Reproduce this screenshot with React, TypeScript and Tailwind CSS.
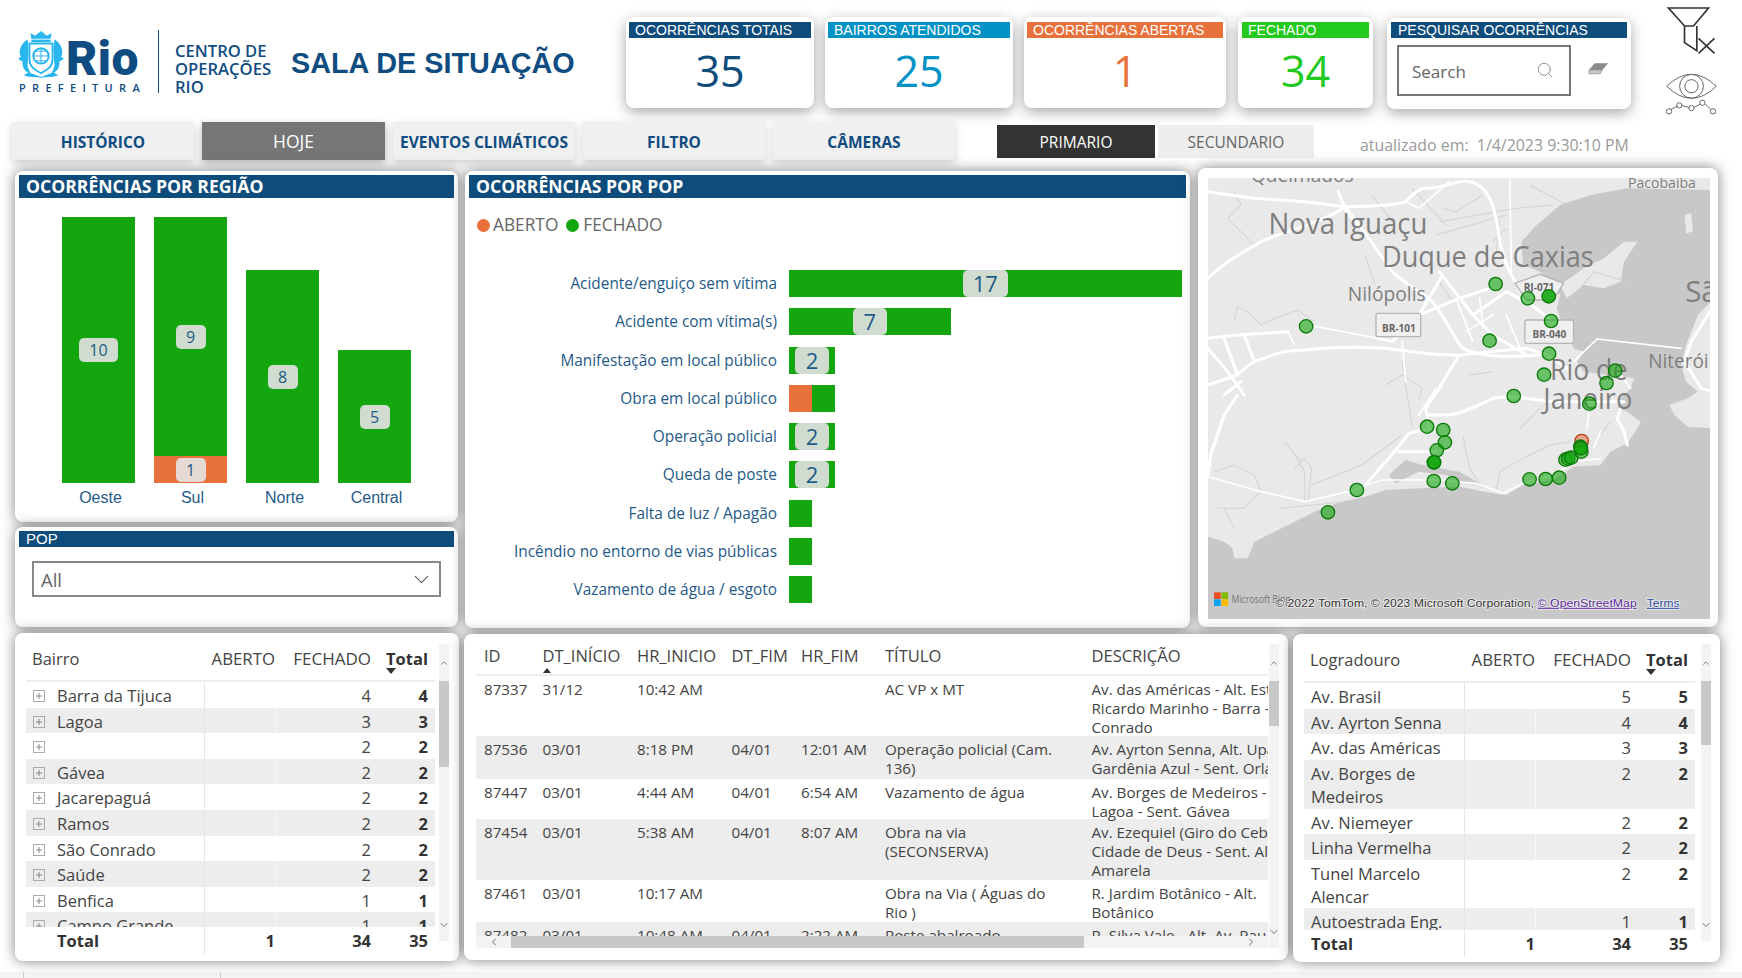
import React from 'react';
import { ChevronDown, ChevronLeft, ChevronRight, ChevronUp, Search } from 'lucide-react';

const Panel: React.FC<{ children: React.ReactNode; className?: string }> = ({ children, className }) => (
  <div className={`relative bg-white rounded-[8px] shadow-[0_0_14px_rgba(0,0,0,0.5)] ${className}`}>{children}</div>
);

const kpis = [
  { title: 'OCORRÊNCIAS TOTAIS', value: '35', bar: 'bg-[#0e4c7c]', text: 'text-[#0e4c7c]', card: 'w-[188px] ml-0', inner: 'mx-[3px]' },
  { title: 'BAIRROS ATENDIDOS', value: '25', bar: 'bg-[#0092c4]', text: 'text-[#0092c4]', card: 'w-[188px] ml-[11px]', inner: 'mx-[3px]' },
  { title: 'OCORRÊNCIAS ABERTAS', value: '1', bar: 'bg-[#e8703a]', text: 'text-[#e8703a]', card: 'w-[202px] ml-[11px]', inner: 'mx-[3px]' },
  { title: 'FECHADO', value: '34', bar: 'bg-[#22c91e]', text: 'text-[#22c91e]', card: 'w-[135px] ml-[12px]', inner: 'mx-[4px]' },
];

const regions = [
  { name: 'Oeste', closed: 10, open: 0, badge: 'w-[39px]' },
  { name: 'Sul', closed: 9, open: 1, badge: 'w-[30px]' },
  { name: 'Norte', closed: 8, open: 0, badge: 'w-[30px]' },
  { name: 'Central', closed: 5, open: 0, badge: 'w-[30px]' },
];

const pops = [
  { name: 'Acidente/enguiço sem vítima', closed: 17, open: 0, label: '17', badge: 'w-[45px]' },
  { name: 'Acidente com vítima(s)', closed: 7, open: 0, label: '7', badge: 'w-[34px]' },
  { name: 'Manifestação em local público', closed: 2, open: 0, label: '2', badge: 'w-[34px]' },
  { name: 'Obra em local público', closed: 1, open: 1, label: '', badge: '' },
  { name: 'Operação policial', closed: 2, open: 0, label: '2', badge: 'w-[34px]' },
  { name: 'Queda de poste', closed: 2, open: 0, label: '2', badge: 'w-[34px]' },
  { name: 'Falta de luz / Apagão', closed: 1, open: 0, label: '', badge: '' },
  { name: 'Incêndio no entorno de vias públicas', closed: 1, open: 0, label: '', badge: '' },
  { name: 'Vazamento de água / esgoto', closed: 1, open: 0, label: '', badge: '' },
];

const bairros = [
  ['Barra da Tijuca', '4'],
  ['Lagoa', '3'],
  ['', '2'],
  ['Gávea', '2'],
  ['Jacarepaguá', '2'],
  ['Ramos', '2'],
  ['São Conrado', '2'],
  ['Saúde', '2'],
  ['Benfica', '1'],
  ['Campo Grande', '1'],
];

const logradouros = [
  ['Av. Brasil', '5'],
  ['Av. Ayrton Senna', '4'],
  ['Av. das Américas', '3'],
  ['Av. Borges de Medeiros', '2'],
  ['Av. Niemeyer', '2'],
  ['Linha Vermelha', '2'],
  ['Tunel Marcelo Alencar', '2'],
  ['Autoestrada Eng. Fernando', '1'],
];

const events = [
  { h: 'h-[60px]', id: '87337', start: '31/12', hr: '10:42 AM', end: '', hrEnd: '', title: ['AC VP x MT'], desc: ['Av. das Américas - Alt. Estr', 'Ricardo Marinho - Barra - São', 'Conrado'] },
  { h: 'h-[43px]', id: '87536', start: '03/01', hr: '8:18 PM', end: '04/01', hrEnd: '12:01 AM', title: ['Operação policial (Cam.', '136)'], desc: ['Av. Ayrton Senna, Alt. Upa', 'Gardênia Azul - Sent. Orla'] },
  { h: 'h-[40px]', id: '87447', start: '03/01', hr: '4:44 AM', end: '04/01', hrEnd: '6:54 AM', title: ['Vazamento de água'], desc: ['Av. Borges de Medeiros -', 'Lagoa - Sent. Gávea'] },
  { h: 'h-[61px]', id: '87454', start: '03/01', hr: '5:38 AM', end: '04/01', hrEnd: '8:07 AM', title: ['Obra na via', '(SECONSERVA)'], desc: ['Av. Ezequiel (Giro do Cebola)', 'Cidade de Deus - Sent. Alta', 'Amarela'] },
  { h: 'h-[42px]', id: '87461', start: '03/01', hr: '10:17 AM', end: '', hrEnd: '', title: ['Obra na Via ( Águas do', 'Rio )'], desc: ['R. Jardim Botânico - Alt.', 'Botânico'] },
  { h: 'h-[40px]', id: '87482', start: '03/01', hr: '10:48 AM', end: '04/01', hrEnd: '2:22 AM', title: ['Poste abalroado'], desc: ['R. Silva Vale - Alt. Av. Pau'] },
];

const markers: [number, number][] = [
  [868, 327], [964, 370], [1033, 438], [850, 497], [1027, 536], [1012, 599], [1224, 587], [1198, 624], [922, 663], [1147, 686],
  [304, 454], [664, 755], [712, 765], [717, 802], [693, 826], [684, 862], [684, 918], [739, 925], [455, 945], [369, 1012],
  [969, 913], [1017, 912], [1057, 908], [1076, 854], [1084, 851], [1093, 848], [1120, 815], [1123, 830],
];

const roads = [
  'M12 310 C60 260 120 230 170 200 C230 170 340 150 420 95 C460 150 500 200 560 290 C600 330 650 350 680 380 C720 430 750 500 770 520 C830 550 920 545 1000 540',
  'M400 50 L420 100 L440 130',
  'M12 50 L150 70 L300 80 L420 95 C500 95 570 90 600 80 C620 60 640 40 660 40 C700 40 740 25 760 20 C800 15 830 30 850 70 C870 110 875 160 880 200 C890 240 900 270 910 290 C930 330 950 370 960 380 L1040 440',
  'M12 490 L100 480 L250 470 M520 490 L560 500 L640 420 L760 370 L850 340',
  'M12 630 L100 600 C130 570 150 555 180 550 C220 530 260 525 300 525 C380 515 460 515 540 520 C620 530 700 545 770 540 C840 530 900 525 960 520 L1020 540 L1080 580',
  'M760 540 C730 590 710 620 700 640 C680 670 665 690 660 700 L670 760 L610 775 L550 850 L480 930',
  'M670 720 L730 720 C770 715 820 690 860 670 C880 665 900 665 920 665 L1040 680 L1150 680 L1250 680',
  'M1240 700 L1230 730 L1250 770 L1260 810',
  'M100 660 L60 720 L20 840 L12 900',
  'M1518 390 L1450 500 L1430 560 L1480 640 L1518 650',
  'M580 830 L690 830',
  'M700 290 L800 420 L860 480 L960 540',
  'M640 420 L710 300 M800 420 L900 350 L990 400',
  'M12 520 L70 590 L120 660',
  'M60 490 L100 600 M120 480 L150 560',
  'M60 660 L110 620',
];

const thinRoads = [
  'M12 905 L170 950 L300 980 L430 950 L530 915 L700 915 L810 925 L890 955 L960 920 L1040 900 L1100 860 L1180 850',
  'M1100 560 L1170 492 L1420 520',
  'M330 454 L520 490',
  'M910 10 L915 290',
  'M750 370 L800 500 M820 370 L830 450 M860 420 L780 470 M900 420 L940 520',
  'M590 500 L600 620 M690 640 L640 720 M730 20 L640 100 L600 80',
  'M1240 600 L1270 640 M1180 770 L1160 820 M1150 680 L1140 760',
  'M250 470 L270 510',
];

const contours = [
  'M70 130 L110 90 L90 50 M70 130 L150 210',
  'M90 440 L100 395 L130 410 L170 450 L200 435 L280 405 L330 440',
  'M540 630 L590 600 L650 640 L640 670',
  'M700 140 L930 100 L1040 90',
  'M690 180 L900 120',
  'M270 840 L300 890 L300 980',
  'M590 560 L600 630 L620 760',
  'M770 780 L790 880 L830 940',
  'M870 950 L880 890 L950 850 L1030 810 L1090 800',
  'M940 760 L1010 690',
  'M30 890 L90 870 L150 900 L170 950 L120 1000 L40 1000',
  'M270 880 L300 850 L320 880 L310 980',
  'M320 930 L470 870 L550 810 L590 780',
  'M230 1000 L420 980',
  'M90 1060 L60 1000',
  'M240 800 L290 860',
  'M500 60 L560 140 M620 40 L720 150 M970 30 L1080 90',
  'M1180 780 L1210 740',
  'M1260 320 L1160 290 L1120 340',
  'M880 130 L870 230 M900 160 L860 200 M830 60 L750 110 L710 100',
  'M480 240 L510 330 M790 600 L860 590 M700 320 L740 380',
];

const Header = () => (
  <div className="flex h-[122px] shrink-0">
    <div className="w-[626px] flex shrink-0 pt-[30px] pl-[16px]">
      <div className="w-[125px] shrink-0">
        <div className="flex h-[50px]">
          <svg viewBox="0 0 50 52" className="w-[50px] h-[50px] shrink-0" fill="#29b6ee">
            <path d="M15 9 L14 3 L19 6 L25 1 L31 6 L36 3 L35 9 Z" />
            <rect x="15" y="10" width="20" height="2.5" />
            <path d="M13 14 H37 V31 C37 39 30 42 25 45 C20 42 13 39 13 31 Z" fill="none" stroke="#29b6ee" strokeWidth="2" />
            <circle cx="25" cy="27" r="8" fill="none" stroke="#29b6ee" strokeWidth="2" />
            <path d="M17 27 H33 M25 19 V35 M19 22 H31 M19 32 H31" stroke="#29b6ee" strokeWidth="1" />
            <path d="M11 10 C4 14 1 22 4 28 L1 30 L6 33 C5 38 8 44 14 45 L11 38 L12 20 Z" />
            <path d="M39 10 C46 14 49 22 46 28 L49 30 L44 33 C45 38 42 44 36 45 L39 38 L38 20 Z" />
            <path d="M7 47 C14 50 20 48 25 50 C30 48 36 50 43 47 L38 44 L25 49 L12 44 Z" />
          </svg>
          <div className="mt-[1px] text-[48px] leading-[56px] font-black text-[#0f4c81] tracking-[0.5px] [font-family:'Roboto',sans-serif]">Rio</div>
        </div>
        <div className="mt-[1px] text-[11px] leading-[14px] font-semibold tracking-[6.3px] text-[#0f4c81] [font-family:'Open_Sans',sans-serif] whitespace-nowrap pl-[3px]">PREFEITURA</div>
      </div>
      <div className="ml-[17px] w-[1px] h-[63px] bg-[#0f4c81] shrink-0" />
      <div className="ml-[16px] mt-[12px] w-[116px] shrink-0 text-[16.6px] leading-[18px] font-semibold text-[#0f4c81] [font-family:'Open_Sans',sans-serif]">
        <div>CENTRO DE</div>
        <div>OPERAÇÕES</div>
        <div>RIO</div>
      </div>
      <div className="mt-[16px] text-[28.8px] leading-[34px] font-bold text-[#0f4c81] whitespace-nowrap [font-family:'Liberation_Sans',sans-serif]">SALA DE SITUAÇÃO</div>
    </div>
    {kpis.map(k => (
      <div key={k.title} className={`${k.card} h-[91px] mt-[17px] bg-white rounded-[8px] shadow-[0_4px_14px_rgba(0,0,0,0.35)] pt-[5px] shrink-0`}>
        <div className={`${k.inner} ${k.bar} h-[16px] pl-[6px] text-[14px] leading-[16px] text-white whitespace-nowrap [font-family:'Liberation_Sans',sans-serif]`}>{k.title}</div>
        <div className={`text-center text-[43px] leading-[62px] mt-[2px] ${k.text} [font-family:'Open_Sans',sans-serif]`}>{k.value}</div>
      </div>
    ))}
    <div className="w-[244px] ml-[14px] h-[91px] mt-[18px] bg-white rounded-[8px] shadow-[0_4px_14px_rgba(0,0,0,0.35)] pt-[4px] shrink-0">
      <div className="mx-[4px] bg-[#0e4c7c] h-[16px] pl-[7px] text-[14px] leading-[16px] text-white whitespace-nowrap [font-family:'Liberation_Sans',sans-serif]">PESQUISAR OCORRÊNCIAS</div>
      <div className="flex items-center mt-[7px] ml-[10px]">
        <div className="w-[174px] h-[51px] border-2 border-[#777] flex items-center justify-between pl-[13px] pr-[15px]">
          <span className="text-[17px] text-[#666] mt-[2px] [font-family:'Open_Sans',sans-serif]">Search</span>
          <Search size={18} strokeWidth={1.2} color="#888" className="mt-[-2px]" />
        </div>
        <svg viewBox="0 0 22 13" className="w-[21px] h-[13px] ml-[17px] mt-[-5px]">
          <path d="M7 1 H21 L15 8 H1 Z" fill="#8a8a8a" />
          <path d="M1 8 H15 L13 12 H1 Z" fill="#c8c8c8" stroke="#8a8a8a" strokeWidth="0.7" />
        </svg>
      </div>
    </div>
    <div className="ml-[34px] pt-[5px] w-[54px] shrink-0">
      <svg viewBox="850 15 155 150" className="w-[52px] h-[50px]" fill="none" stroke="#333" strokeWidth="5">
        <path d="M860 24 H980 L935 78 H908 Z M908 78 V128 L945 152 V78" />
        <path d="M950 115 L998 160 M998 115 L950 160" />
      </svg>
      <svg viewBox="850 222 160 130" className="w-[53px] h-[43px] mt-[18px]" fill="none" stroke="#666" strokeWidth="3">
        <path d="M855 262 Q930 190 1005 262 Q930 335 855 262 Z" />
        <circle cx="930" cy="262" r="36" />
        <circle cx="930" cy="262" r="20" />
        <path d="M868 332 L888 322 M900 320 L922 326 M938 326 L956 316 M972 316 L988 332" />
        <circle cx="862" cy="338" r="8" />
        <circle cx="893" cy="320" r="8" />
        <circle cx="930" cy="328" r="8" />
        <circle cx="963" cy="312" r="8" />
        <circle cx="995" cy="338" r="8" />
      </svg>
    </div>
  </div>
);

const tabs = ['HISTÓRICO', 'HOJE', 'EVENTOS CLIMÁTICOS', 'FILTRO', 'CÂMERAS'];

const TabRow = () => (
  <div className="flex h-[38px] shrink-0 pl-[12px] [font-family:'Open_Sans',sans-serif]">
    {tabs.map(t =>
      t === 'HOJE' ? (
        <div key={t} className="w-[183px] mr-[8px] h-[38px] flex items-center justify-center bg-[#767676] text-white text-[17.5px] shadow-[0_3px_8px_rgba(0,0,0,0.3)]">
          {t}
        </div>
      ) : (
        <div key={t} className="w-[182px] mr-[8px] h-[38px] pt-[4px] flex items-center justify-center bg-[#f0f0f0] text-[#0f4c81] text-[15.5px] font-bold whitespace-nowrap shadow-[0_3px_8px_rgba(0,0,0,0.18)]">
          {t}
        </div>
      ),
    )}
    <div className="ml-[34px] mt-[3px] w-[158px] h-[33px] pt-[2px] flex items-center justify-center bg-[#333] text-white text-[15.5px]">PRIMARIO</div>
    <div className="ml-[3px] mt-[3px] w-[156px] h-[33px] pt-[2px] flex items-center justify-center bg-[#eee] text-[#666] text-[15.5px]">SECUNDARIO</div>
    <div className="ml-[46px] mt-[12px] text-[15.9px] leading-[22px] text-[#999] whitespace-pre">atualizado em:  1/4/2023 9:30:10 PM</div>
  </div>
);

const RegionChart = () => (
  <Panel className="w-[443px] h-[351px] pt-[4px] shrink-0">
    <div className="mx-[4px] h-[23px] bg-[#0e4c7c] pl-[7px] text-white text-[17.6px] leading-[23px] font-bold whitespace-nowrap [font-family:'Open_Sans',sans-serif]">OCORRÊNCIAS POR REGIÃO</div>
    <div className="flex gap-[19px] ml-[47px] mt-[19px] h-[266px] items-end">
      {regions.map(r => (
        <div key={r.name} className="w-[73px] flex flex-col">
          <div className="bg-[#13a60e] flex items-center justify-center" style={{ height: r.closed * 26.6 }}>
            <div className={`${r.badge} h-[24px] rounded-[5px] bg-[#cfdccf] flex items-center justify-center text-[16px] text-[#1f5a88] [font-family:'Open_Sans',sans-serif]`}>{r.closed}</div>
          </div>
          {r.open > 0 && (
            <div className="bg-[#e8703a] flex items-center justify-center" style={{ height: r.open * 26.6 }}>
              <div className={`${r.badge} h-[24px] rounded-[5px] bg-[#e6d8d2] flex items-center justify-center text-[16px] text-[#1f5a88] [font-family:'Open_Sans',sans-serif]`}>{r.open}</div>
            </div>
          )}
        </div>
      ))}
    </div>
    <div className="flex gap-[19px] ml-[49px] mt-[5px]">
      {regions.map(r => (
        <div key={r.name} className="w-[73px] text-center text-[16px] leading-[20px] text-[#1f5a88] [font-family:'Liberation_Sans',sans-serif]">{r.name}</div>
      ))}
    </div>
  </Panel>
);

const PopSlicer = () => (
  <Panel className="w-[443px] h-[100px] mt-[5px] pt-[4px] shrink-0">
    <div className="mx-[4px] h-[16px] bg-[#0e4c7c] pl-[7px] text-white text-[15px] leading-[16px] [font-family:'Liberation_Sans',sans-serif]">POP</div>
    <div className="mx-[17px] mt-[14px] h-[36px] border-2 border-[#888] flex items-center justify-between pl-[7px] pr-[5px]">
      <span className="text-[18.5px] text-[#666] mt-[2px] [font-family:'Open_Sans',sans-serif]">All</span>
      <ChevronDown size={25} strokeWidth={1} color="#555" />
    </div>
  </Panel>
);

const PopChart = () => (
  <Panel className="w-[725px] h-[457px] ml-[7px] mt-[3px] pt-[4px] shrink-0 [font-family:'Open_Sans',sans-serif]">
    <div className="mx-[4px] h-[23px] bg-[#0e4c7c] pl-[7px] text-white text-[17.6px] leading-[23px] font-bold whitespace-nowrap">OCORRÊNCIAS POR POP</div>
    <div className="flex items-center h-[24px] mt-[15px] ml-[12px] text-[17.3px] text-[#666]">
      <span className="w-[13px] h-[13px] rounded-full bg-[#e8703a]" />
      <span className="ml-[3px]">ABERTO</span>
      <span className="ml-[8px] w-[13px] h-[13px] rounded-full bg-[#13a60e]" />
      <span className="ml-[4px]">FECHADO</span>
    </div>
    <div className="mt-[33px]">
      {pops.map(p => (
        <div key={p.name} className="flex h-[27px] mb-[11.25px] items-center">
          <div className="w-[312px] text-right text-[15.4px] leading-[27px] text-[#1f5a88] whitespace-nowrap shrink-0">{p.name}</div>
          <div className="ml-[12px] h-[27px] flex">
            {p.open > 0 && <div className="h-full bg-[#e8703a]" style={{ width: p.open * 23.2 }} />}
            <div className="h-full bg-[#13a60e] flex items-center justify-center" style={{ width: p.closed * 23.1 }}>
              {p.label && (
                <div className={`${p.badge} shrink-0 h-[27px] rounded-[5px] bg-[#cfdccf] flex items-center justify-center text-[22px] text-[#1f5a88]`}>{p.label}</div>
              )}
            </div>
          </div>
        </div>
      ))}
    </div>
  </Panel>
);

const RioMap = () => (
  <Panel className="w-[520px] h-[459px] ml-[8px] pt-[10px] pl-[10px] shrink-0">
    <svg viewBox="12 9 1494 1323" preserveAspectRatio="none" className="block w-[502px] h-[441px] bg-[#e9e9e9]">
      <path
        d="M12 1085 L60 1100 L85 1120 L90 1150 L130 1150 L150 1100 L210 1070 L270 1040 L340 1005 L410 980 L480 965 L540 945 L640 940 L760 935 L860 955 L900 960 L950 930 L1040 915 L1100 875 L1180 870 L1210 830 L1260 805 L1290 760 L1300 740 L1260 710 L1230 700 L1240 670 L1270 640 L1280 610 L1210 600 L1130 590 L1110 560 L1130 530 L1100 520 L1080 470 L1060 430 L1050 400 L1060 360 L1040 330 L1000 290 L950 270 L945 200 L990 150 L1060 90 L1150 60 L1260 40 L1518 45 L1518 1340 L12 1340 Z"
        fill="#c8c8c8"
      />
      <path d="M1518 370 L1470 420 L1435 510 L1420 570 L1435 620 L1470 650 L1440 670 L1385 690 L1400 720 L1440 755 L1518 760 Z" fill="#e9e9e9" />
      <path d="M1060 330 L1130 280 L1190 250 L1250 200 L1290 200 L1250 260 L1240 320 L1190 340 L1130 330 L1080 370 Z" fill="#e9e9e9" />
      <path d="M1430 120 L1450 115 L1455 170 L1435 175 Z" fill="#e9e9e9" />
      <path d="M550 900 L600 855 L650 870 L700 880 L760 890 L830 930 L780 925 L720 900 L640 890 L570 925 Z" fill="#c8c8c8" />
      <g className="blur-[0.6px]">
        {contours.map((d, i) => (
          <path key={i} d={d} fill="none" stroke="#d2d2d2" strokeWidth="3" />
        ))}
        {roads.map((d, i) => (
          <path key={i} d={d} fill="none" stroke="#fff" strokeWidth="9" strokeLinejoin="round" strokeLinecap="round" />
        ))}
        {thinRoads.map((d, i) => (
          <path key={i} d={d} fill="none" stroke="#fff" strokeWidth="5" strokeLinejoin="round" strokeLinecap="round" />
        ))}
      </g>
      <g className="[font-family:'Open_Sans',sans-serif]" fill="#7f7f7f">
        <text x="140" y="22" fontSize="60" textLength="305" lengthAdjust="spacingAndGlyphs">Queimados</text>
        <text x="192" y="178" fontSize="88" textLength="473" lengthAdjust="spacingAndGlyphs">Nova Iguaçu</text>
        <text x="530" y="275" fontSize="88" textLength="630" lengthAdjust="spacingAndGlyphs">Duque de Caxias</text>
        <text x="428" y="378" fontSize="62" textLength="232" lengthAdjust="spacingAndGlyphs">Nilópolis</text>
        <text x="1030" y="615" fontSize="88" textLength="230" lengthAdjust="spacingAndGlyphs">Rio de</text>
        <text x="1010" y="703" fontSize="88" textLength="265" lengthAdjust="spacingAndGlyphs">Janeiro</text>
        <text x="1322" y="578" fontSize="62" textLength="180" lengthAdjust="spacingAndGlyphs">Niterói</text>
        <text x="1432" y="380" fontSize="88">São</text>
        <text x="1262" y="38" fontSize="42" textLength="202" lengthAdjust="spacingAndGlyphs">Pacobaiba</text>
      </g>
      <g className="[font-family:'Open_Sans',sans-serif]" fontWeight="700" fontSize="30" fill="#666" textAnchor="middle">
        <rect x="512" y="415" width="133" height="70" rx="6" fill="#efefef" stroke="#b5b5b5" strokeWidth="4" />
        <text x="580" y="470">BR-101</text>
        <rect x="955" y="435" width="145" height="70" rx="6" fill="#efefef" stroke="#b5b5b5" strokeWidth="4" />
        <text x="1028" y="490">BR-040</text>
        <path d="M925 325 L1000 298 L1070 325 L1040 375 L960 375 Z" fill="#efefef" stroke="#b5b5b5" strokeWidth="4" />
        <text x="997" y="348">RJ-071</text>
      </g>
      <circle cx="1124" cy="798" r="20" fill="#e8703a" fillOpacity="0.55" stroke="#b83a10" strokeWidth="4" />
      {markers.map(([x, y], i) => (
        <circle key={i} cx={x} cy={y} r="20" fill="#13a60e" fillOpacity="0.6" stroke="#0a7a0a" strokeWidth="4" />
      ))}
      <circle cx="1026" cy="364" r="20" fill="#13a60e" fillOpacity="0.9" stroke="#0a7a0a" strokeWidth="4" />
      <circle cx="685" cy="862" r="20" fill="#13a60e" fillOpacity="0.9" stroke="#0a7a0a" strokeWidth="4" />
      <circle cx="1122" cy="820" r="20" fill="#13a60e" fillOpacity="0.8" stroke="#0a7a0a" strokeWidth="4" />
      <rect x="30" y="1252" width="20" height="20" fill="#f25022" />
      <rect x="52" y="1252" width="20" height="20" fill="#7fba00" />
      <rect x="30" y="1273" width="20" height="20" fill="#00a4ef" />
      <rect x="52" y="1273" width="20" height="20" fill="#ffb900" />
      <text x="82" y="1283" fontSize="30" fill="#777" className="[font-family:'Open_Sans',sans-serif]" textLength="175" lengthAdjust="spacingAndGlyphs">Microsoft Bing</text>
      <g className="[font-family:'Liberation_Sans',sans-serif]" fontSize="35" stroke="#fff" strokeWidth="5" paintOrder="stroke" strokeOpacity="0.7">
        <text x="212" y="1295" fill="#333" textLength="770" lengthAdjust="spacingAndGlyphs">© 2022 TomTom, © 2023 Microsoft Corporation,</text>
        <text x="993" y="1295" fill="#5b2a9a" textDecoration="underline" textLength="295" lengthAdjust="spacingAndGlyphs">© OpenStreetMap</text>
        <text x="1318" y="1295" fill="#2b4a9e" textDecoration="underline" textLength="97" lengthAdjust="spacingAndGlyphs">Terms</text>
      </g>
    </svg>
  </Panel>
);

const VScroll: React.FC<{ thumb: string; top: string; track: string }> = ({ thumb, top, track }) => (
  <div className={`w-[10px] ${track} bg-[#f3f3f3] flex flex-col items-center shrink-0`}>
    <div className={`${top} w-full flex items-center justify-center`}>
      <ChevronUp size={12} strokeWidth={1.5} color="#444" />
    </div>
    <div className={`${thumb} w-full bg-[#c8c8c8]`} />
    <div className="flex-1" />
    <ChevronDown size={12} strokeWidth={1.5} color="#444" className="mb-[10px]" />
  </div>
);

const ExpandIcon = () => (
  <svg viewBox="0 0 12 12" className="w-[12px] h-[12px] shrink-0" fill="none" stroke="#aaa">
    <rect x="0.5" y="0.5" width="11" height="11" />
    <path d="M3 6 H9 M6 3 V9" stroke="#888" />
  </svg>
);

const MatrixTable: React.FC<{
  label: string;
  rows: string[][];
  expandable?: boolean;
  first: string;
  fech: string;
  rowsHeight: string;
  tableW: string;
  panel: string;
  scroll: React.ReactNode;
}> = ({ label, rows, expandable, first, fech, rowsHeight, tableW, panel, scroll }) => (
  <Panel className={`${panel} flex shrink-0 text-[16.5px] text-[#444] [font-family:'Open_Sans',sans-serif]`}>
    <div className={`${tableW} shrink-0`}>
      <div className="flex h-[44px] border-b-2 border-[#eee] leading-[41px] whitespace-nowrap">
        <div className={`${first} ${expandable ? 'pl-[6px]' : 'pl-[6px]'} shrink-0`}>{label}</div>
        <div className="w-[71px] text-right shrink-0 text-[16.8px]">ABERTO</div>
        <div className={`${fech} text-right shrink-0 text-[17px]`}>FECHADO</div>
        <div className="w-[57px] text-right shrink-0 font-bold text-[#333] relative text-[16.5px]">
          Total
          <span className="absolute left-[15px] top-[30px] w-0 h-0 border-x-[5px] border-x-transparent border-t-[6px] border-t-[#333]" />
        </div>
      </div>
      <div className={`${rowsHeight} overflow-hidden`}>
        {rows.map((r, i) => (
          <div key={i} className={`flex leading-[22.7px] ${expandable ? 'h-[25.6px]' : ''} ${i % 2 === 1 ? 'bg-[#ededed]' : ''}`}>
            <div className={`${first} shrink-0 flex items-start pt-[3px] pl-[7px]`}>
              {expandable && (
                <span className="mt-[5px] mr-[12px]">
                  <ExpandIcon />
                </span>
              )}
              <span className="pr-[20px]">{r[0]}</span>
            </div>
            <div className="w-[71px] shrink-0 border-l border-[#e6e6e6]" />
            <div className={`${fech} text-right shrink-0 pt-[3px] border-l border-white/60`}>{r[1]}</div>
            <div className="w-[57px] text-right shrink-0 pt-[3px] font-bold text-[#333]">{r[1]}</div>
          </div>
        ))}
      </div>
      <div className="flex leading-[27px] font-bold text-[#333]">
        <div className={`${first} shrink-0 ${expandable ? 'pl-[31px]' : 'pl-[7px]'}`}>Total</div>
        <div className="w-[71px] text-right shrink-0 border-l border-[#e6e6e6]">1</div>
        <div className={`${fech} text-right shrink-0`}>34</div>
        <div className="w-[57px] text-right shrink-0">35</div>
      </div>
    </div>
    {scroll}
  </Panel>
);

const EventsTable = () => (
  <Panel className="w-[824px] h-[326px] ml-[5px] mt-[1px] pt-[5px] pl-[12px] flex shrink-0 text-[15.2px] text-[#444] [font-family:'Open_Sans',sans-serif]">
    <div className="w-[792px] shrink-0">
      <div className="h-[297px] overflow-hidden">
        <div className="w-[900px]">
          <div className="grid grid-cols-[58.5px_94.5px_94.5px_69.5px_84px_206.5px_292px] h-[37px] border-b-2 border-[#eee] leading-[34px] text-[16.5px] whitespace-nowrap relative">
            <div className="pl-[8px]">ID</div>
            <div className="pl-[8px] relative">
              DT_INÍCIO
              <span className="absolute left-[8px] top-[29px] w-0 h-0 border-x-[4px] border-x-transparent border-b-[5px] border-b-[#333]" />
            </div>
            <div className="pl-[8px]">HR_INICIO</div>
            <div className="pl-[8px]">DT_FIM</div>
            <div className="pl-[8px]">HR_FIM</div>
            <div className="pl-[8px]">TÍTULO</div>
            <div className="pl-[8px]">DESCRIÇÃO</div>
          </div>
          {events.map((e, i) => (
            <div key={e.id} className={`grid grid-cols-[58.5px_94.5px_94.5px_69.5px_84px_206.5px_292px] ${e.h} pt-[4px] leading-[19px] whitespace-nowrap ${i % 2 === 1 ? 'bg-[#ededed]' : ''}`}>
              <div className="pl-[8px]">{e.id}</div>
              <div className="pl-[8px]">{e.start}</div>
              <div className="pl-[8px]">{e.hr}</div>
              <div className="pl-[8px]">{e.end}</div>
              <div className="pl-[8px]">{e.hrEnd}</div>
              <div className="pl-[8px]">
                {e.title.map(l => (
                  <div key={l}>{l}</div>
                ))}
              </div>
              <div className="pl-[8px]">
                {e.desc.map(l => (
                  <div key={l}>{l}</div>
                ))}
              </div>
            </div>
          ))}
        </div>
      </div>
      <div className="h-[12px] bg-[#f3f3f3] flex items-center">
        <div className="w-[35px] flex justify-center shrink-0">
          <ChevronLeft size={12} strokeWidth={1.5} color="#444" />
        </div>
        <div className="w-[573px] h-full bg-[#c8c8c8] shrink-0" />
        <div className="flex-1" />
        <ChevronRight size={12} strokeWidth={1.5} color="#444" className="mr-[11px]" />
      </div>
    </div>
    <div className="ml-[1px] mt-[5px]">
      <VScroll top="h-[37px]" thumb="h-[45px]" track="h-[304px]" />
    </div>
  </Panel>
);

export default function App() {
  return (
    <div className="w-[1742px] h-[978px] overflow-hidden bg-white flex flex-col">
      <Header />
      <TabRow />
      <div className="flex pl-[15px] mt-[8px] items-start shrink-0">
        <div className="flex flex-col mt-[3px] shrink-0">
          <RegionChart />
          <PopSlicer />
        </div>
        <PopChart />
        <RioMap />
      </div>
      <div className="flex pl-[15px] mt-[5px] items-start shrink-0">
        <MatrixTable
          label="Bairro"
          rows={bairros}
          expandable
          first="w-[178px]"
          fech="w-[96px]"
          rowsHeight="h-[245px]"
          tableW="w-[409px] ml-[11px] mt-[5px]"
          panel="w-[444px] h-[328px]"
          scroll={
            <div className="ml-[4px] mt-[11px]">
              <VScroll top="h-[37px]" thumb="h-[86px]" track="h-[297px]" />
            </div>
          }
        />
        <EventsTable />
        <MatrixTable
          label="Logradouro"
          rows={logradouros}
          first="w-[160px]"
          fech="w-[96px]"
          rowsHeight="h-[247px]"
          tableW="w-[391px] ml-[11px] mt-[5px]"
          panel="w-[427px] h-[328px] ml-[5px] mt-[1px]"
          scroll={
            <div className="ml-[6px] mt-[10px]">
              <VScroll top="h-[37px]" thumb="h-[64px]" track="h-[297px]" />
            </div>
          }
        />
      </div>
      <div className="flex mt-[10px] h-[10px] bg-[#f5f5f5] shrink-0">
        <div className="w-[24px] border-r border-[#ccc]" />
        <div className="w-[197px] border-r border-[#ccc]" />
      </div>
    </div>
  );
}
